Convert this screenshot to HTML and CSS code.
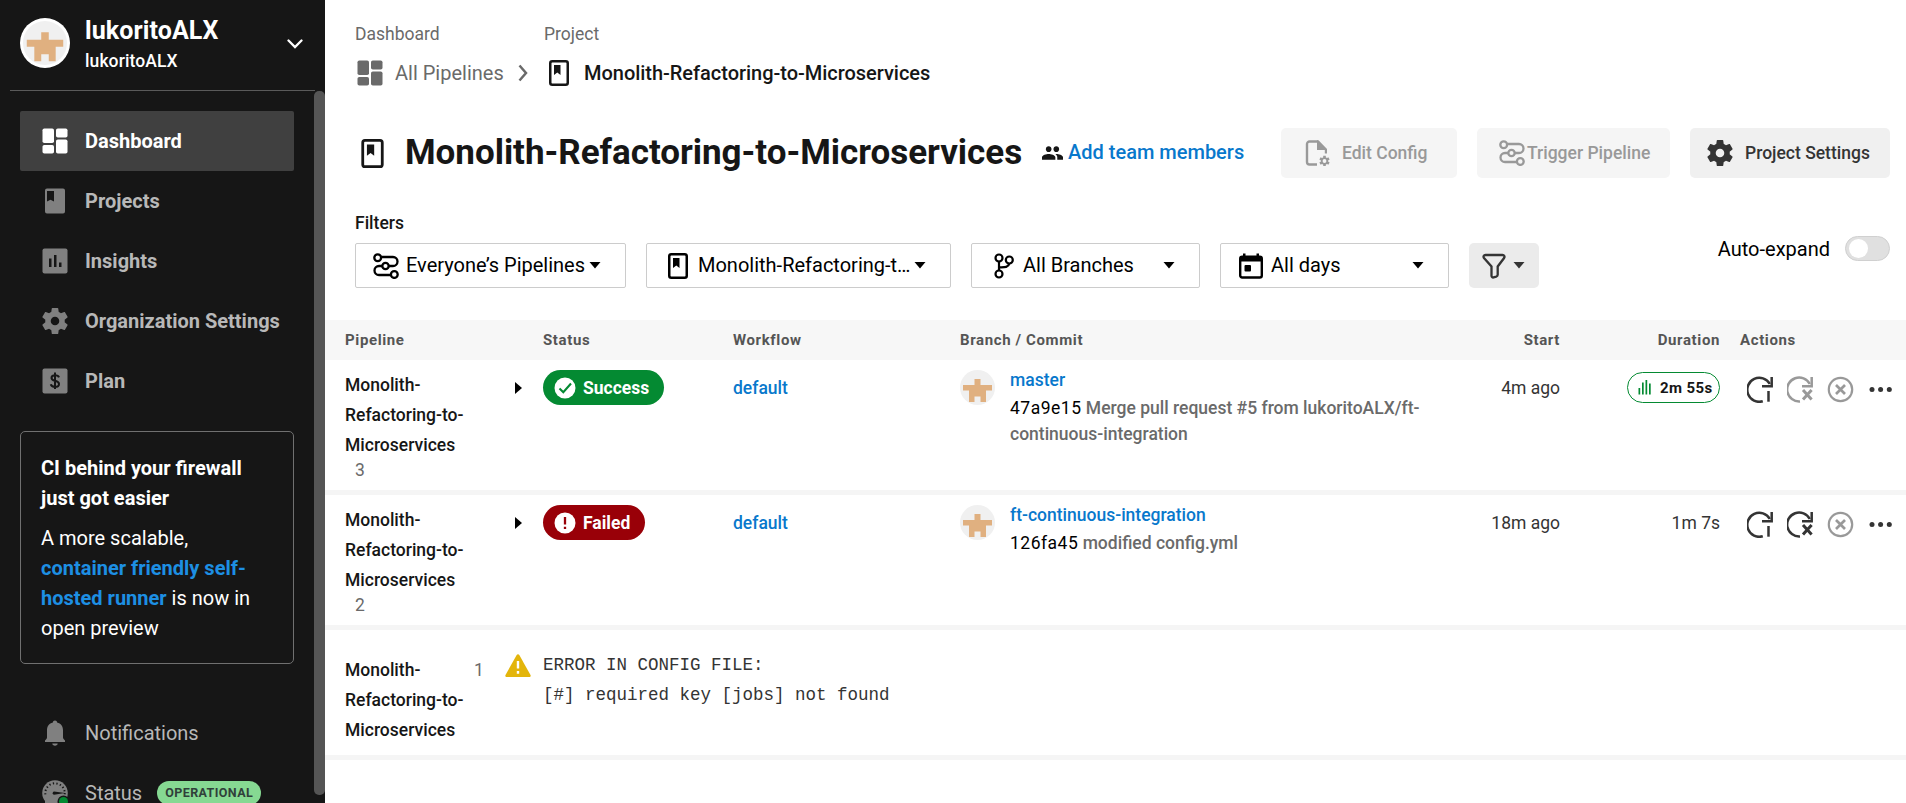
FILE: index.html
```html
<!DOCTYPE html>
<html lang="en">
<head>
<meta charset="utf-8">
<title>Monolith-Refactoring-to-Microservices - Pipelines</title>
<link rel="stylesheet" href="styles.css">
</head>
<body>
<svg class="defs" aria-hidden="true">
  <symbol id="dash" viewBox="0 0 26 26"><rect x="0.5" y="0.5" width="11.5" height="14.5" rx="1.8"/><rect x="14" y="0.5" width="11.5" height="9" rx="1.8"/><rect x="0.5" y="17" width="11.5" height="8.5" rx="1.8"/><rect x="14" y="11.5" width="11.5" height="14" rx="1.8"/></symbol>
  <symbol id="gear" viewBox="2 2 20 20"><path d="M19.43 12.98c.04-.32.07-.64.07-.98s-.03-.66-.07-.98l2.11-1.65c.19-.15.24-.42.12-.64l-2-3.46c-.12-.22-.39-.3-.61-.22l-2.49 1c-.52-.4-1.08-.73-1.69-.98l-.38-2.65C14.46 2.18 14.25 2 14 2h-4c-.25 0-.46.18-.49.42l-.38 2.65c-.61.25-1.17.59-1.69.98l-2.49-1c-.23-.09-.49 0-.61.22l-2 3.46c-.13.22-.07.49.12.64l2.11 1.65c-.04.32-.07.65-.07.98s.03.66.07.98l-2.11 1.65c-.19.15-.24.42-.12.64l2 3.46c.12.22.39.3.61.22l2.49-1c.52.4 1.08.73 1.69.98l.38 2.65c.03.24.24.42.49.42h4c.25 0 .46-.18.49-.42l.38-2.65c.61-.25 1.17-.59 1.69-.98l2.49 1c.23.09.49 0 .61-.22l2-3.46c.12-.22.07-.49-.12-.64l-2.11-1.65zM12 15.3a3.3 3.3 0 1 1 0-6.6 3.3 3.3 0 0 1 0 6.6z"/></symbol>
  <symbol id="book" viewBox="0 0 20 26"><rect x="1.25" y="1.25" width="17.5" height="23.5" rx="2" fill="none" stroke="currentColor" stroke-width="2.5"/><path d="M5 5h6.5v10l-3.2-2.4L5 15z"/></symbol>
  <symbol id="avatar" viewBox="0 0 35 35"><circle cx="17.5" cy="17.5" r="17.5" fill="#f0f0f0"/><path d="M14.5 9h6v6H32v5.500h-6V32h-5.500v-5.500h-6V32H9V20.500H3V15h11.500z" fill="#e0b080"/></symbol>
  <symbol id="pipe" viewBox="0 0 26 26"><g fill="none" stroke="currentColor" stroke-width="2.3"><circle cx="4.700" cy="4.700" r="3.400"/><circle cx="12.500" cy="13" r="3.200"/><circle cx="21.300" cy="21.500" r="3.400"/><path d="M8.200 4H20a4.500 4.500 0 0 1 0 9h-4.200M9.300 13H6a4.500 4.500 0 0 0 0 9h11.800"/></g></symbol>
  <symbol id="caret" viewBox="0 0 12 7"><path d="M0.500 0h11L6 6.500z"/></symbol>
  <symbol id="rerun" viewBox="0 0 27 27"><g fill="none" stroke="currentColor" stroke-width="2.500"><path d="M15.800 25.300a12 12 0 1 1 7-17.300"/><path d="M24.700 1v9.300h-9.700"/><path d="M21.500 15v10.700"/></g></symbol>
  <symbol id="rerunfail" viewBox="0 0 27 27"><g fill="none" stroke="currentColor" stroke-width="2.500"><path d="M13 25.500a12 12 0 1 1 9.800-17.500"/><path d="M24.700 1v9.300h-9.700"/><path stroke-width="3" d="M16 14l8.600 9.500M24.600 14L16 23.500"/></g></symbol>
  <symbol id="cancel" viewBox="0 0 27 27"><g fill="none" stroke="currentColor" stroke-width="2.200"><circle cx="13.500" cy="13.500" r="11.700"/><path stroke-width="2.700" d="M9 9l9 9M18 9l-9 9"/></g></symbol>
  <symbol id="dots" viewBox="0 0 27 27"><circle cx="5" cy="13.500" r="2.500"/><circle cx="13.600" cy="13.500" r="2.500"/><circle cx="22.300" cy="13.500" r="2.500"/></symbol>
</svg>
<div class="app">
  <aside class="sidebar">
    <header class="org">
      <span class="org-avatar"><svg><use href="#avatar"/></svg></span>
      <div class="org-names"><div class="org-name">lukoritoALX</div><div class="org-sub">lukoritoALX</div></div>
      <svg class="chev" viewBox="0 0 16 10"><path d="M1.500 1.500L8 8l6.500-6.500" fill="none" stroke="#fff" stroke-width="2.300" stroke-linecap="round"/></svg>
    </header>
    <div class="side-body">
      <nav class="nav">
        <a class="item active"><svg><use href="#dash"/></svg>Dashboard</a>
        <a class="item"><svg viewBox="0 0 26 26"><path fill-rule="evenodd" d="M5 .5h16a2 2 0 0 1 2 2v21a2 2 0 0 1-2 2H5a2 2 0 0 1-2-2v-21a2 2 0 0 1 2-2zM5 3v10.500l3.500-1.800 3.500 1.800V3z"/></svg>Projects</a>
        <a class="item"><svg viewBox="0 0 26 26"><rect x=".5" y=".5" width="25" height="25" rx="2"/><path d="M7 10.500h2.500V19H7zM12 7h2.500v12H12zM17 14.500h2.500V19H17z" fill="#161616"/></svg>Insights</a>
        <a class="item"><svg><use href="#gear"/></svg>Organization Settings</a>
        <a class="item"><svg viewBox="0 0 26 26"><rect x=".5" y=".5" width="25" height="25" rx="2"/><path d="M17 9.300c-.5-1.400-1.900-2.100-4-2.100-2 0-3.500 1-3.500 2.700 0 3.800 7.500 2 7.500 6 0 1.900-1.600 2.900-4 2.900-2.300 0-3.800-.9-4.200-2.600M13 4.500v16.500" fill="none" stroke="#161616" stroke-width="2"/></svg>Plan</a>
      </nav>
      <section class="promo">
        <h2>CI behind your firewall just got easier</h2>
        <p>A more scalable, <a>container friendly self-hosted runner</a> is now in open preview</p>
      </section>
      <nav class="nav foot">
        <a class="item"><svg viewBox="0 0 26 26"><path d="M13 .5c1.300 0 2.100.8 2.100 1.900C19 3.300 21 6.300 21 10v7.500c0 1.200 1 2 2 3V22H3v-1.500c1-1 2-1.800 2-3V10c0-3.700 2-6.700 5.900-7.600C10.900 1.300 11.700.5 13 .5zM10.300 23.500h5.400c0 1.300-1.200 2.200-2.700 2.200s-2.700-.9-2.700-2.200z"/></svg>Notifications</a>
        <a class="item"><svg viewBox="0 0 26 26"><circle cx="13" cy="13" r="12.800"/><circle cx="13" cy="13" r="9.700" fill="none" stroke="#161616" stroke-width="2" stroke-dasharray="1.300 2.300"/><path d="M3 15.500h20V26H3z"/><path d="M12 11.500l11 1.500-11 1.800a1.700 1.700 0 0 1 0-3.300z" fill="#161616"/><circle cx="21.500" cy="21.500" r="6" fill="#161616"/><circle cx="21.500" cy="21.500" r="4.500" fill="#048a32"/></svg>Status<span class="oper">OPERATIONAL</span></a>
      </nav>
      <div class="scroll"></div>
    </div>
  </aside>
  <main class="main">
    <div class="crumbs">
      <div class="crumb first"><div class="crumb-label">Dashboard</div><div class="crumb-row"><svg class="i26"><use href="#dash"/></svg>All Pipelines<svg class="sep" viewBox="0 0 10 18"><path d="M1.500 1.500L8 9l-6.500 7.500" fill="none" stroke="currentColor" stroke-width="2.500"/></svg></div></div>
      <div class="crumb second"><div class="crumb-label">Project</div><div class="crumb-row"><svg class="bk"><use href="#book"/></svg>Monolith-Refactoring-to-Microservices</div></div>
    </div>
    <div class="title-row">
      <svg class="title-icon"><use href="#book"/></svg>
      <h1>Monolith-Refactoring-to-Microservices</h1>
      <a class="team"><svg viewBox="1 5 22 14"><path d="M16 11c1.660 0 2.990-1.340 2.990-3S17.660 5 16 5c-1.660 0-3 1.340-3 3s1.340 3 3 3zm-8 0c1.660 0 2.990-1.340 2.990-3S9.660 5 8 5C6.340 5 5 6.340 5 8s1.340 3 3 3zm0 2c-2.330 0-7 1.170-7 3.500V19h14v-2.500c0-2.330-4.670-3.500-7-3.500zm8 0c-.29 0-.62.02-.97.05 1.160.84 1.970 1.970 1.970 3.450V19h6v-2.500c0-2.330-4.670-3.500-7-3.500z"/></svg><span>Add team members</span></a>
      <div class="buttons">
        <button class="btn edit off"><svg viewBox="0 0 26 26"><path d="M14 1.500H5.500a2.500 2.500 0 0 0-2.500 2.500v18a2.500 2.500 0 0 0 2.500 2.500H13" fill="none" stroke="currentColor" stroke-width="2.400"/><path d="M13 .3h1.500L23 9v4.500h-2.200V10H13z"/><path d="M20.500 15.800v10.400M16 18.400l9 5.200M25 18.400l-9 5.200" stroke="currentColor" stroke-width="2.600"/><circle cx="20.500" cy="21" r="2.800" fill="#f5f5f5" stroke="currentColor" stroke-width="1.800"/></svg>Edit Config</button>
        <button class="btn trig off"><svg><use href="#pipe"/></svg>Trigger Pipeline</button>
        <button class="btn sett"><svg><use href="#gear"/></svg>Project Settings</button>
      </div>
    </div>
    <div class="filters">
      <div class="filters-left">
        <div class="filters-label">Filters</div>
        <div class="selects">
          <div class="select s1"><svg class="i26"><use href="#pipe"/></svg><span>Everyone’s Pipelines</span><svg class="caret"><use href="#caret"/></svg></div>
          <div class="select s2"><svg class="bk"><use href="#book"/></svg><span>Monolith-Refactoring-t…</span><svg class="caret"><use href="#caret"/></svg></div>
          <div class="select s3"><svg class="branch" viewBox="0 0 20 26"><g fill="none" stroke="currentColor" stroke-width="2.200"><circle cx="5" cy="5" r="3.500"/><circle cx="5" cy="21" r="3.500"/><circle cx="15.300" cy="7" r="3.500"/><path d="M5 8.500v9M5 14.300c5 0 9.500.5 10.300-3.800"/></g></svg><span>All Branches</span><svg class="caret"><use href="#caret"/></svg></div>
          <div class="select s4"><svg class="cal" viewBox="0 0 24 26"><rect x="1.200" y="3.700" width="21.600" height="20.800" rx="2" fill="none" stroke="currentColor" stroke-width="2.400"/><path d="M1 3h22v5.500H1zM4 .5h2.500V4H4zM17.500.5H20V4h-2.500z"/><rect x="5.500" y="12" width="6.500" height="6.500" rx="1"/></svg><span>All days</span><svg class="caret"><use href="#caret"/></svg></div>
          <button class="funnel"><svg class="fn" viewBox="0 0 24 26"><path d="M3.500 2h17c1.800 0 2.500 1.500 1.600 3l-6.400 8.500v8.200c0 1-.6 1.600-1.500 1.900l-2.600.8c-1.200.3-2.100-.4-2.100-1.600v-9.300L2 5C1 3.500 1.700 2 3.500 2z" fill="none" stroke="currentColor" stroke-width="2.300"/></svg><svg class="caret"><use href="#caret"/></svg></button>
        </div>
      </div>
      <div class="auto">Auto-expand<span class="toggle"></span></div>
    </div>
    <div class="row head"><div>Pipeline</div><div></div><div>Status</div><div>Workflow</div><div>Branch / Commit</div><div class="r">Start</div><div class="r">Duration</div><div class="act-h">Actions</div></div>
    <div class="row">
      <div class="pl">Monolith-<br>Refactoring-to-<br>Microservices<div class="num">3</div></div>
      <svg class="tri" viewBox="0 0 7 12"><path d="M0 0l7 6-7 6z"/></svg>
      <div><span class="badge ok"><svg viewBox="0 0 22 22"><circle cx="11" cy="11" r="10.500" fill="#fff"/><path d="M5.500 11.500l3.800 3.800L17 6.500" fill="none" stroke="#048a32" stroke-width="2.100"/></svg>Success</span></div>
      <a class="wf">default</a>
      <div class="commit"><svg><use href="#avatar"/></svg><div><a>master</a><p><b>47a9e15</b> Merge pull request #5 from lukoritoALX/ft-<br>continuous-integration</p></div></div>
      <div class="r time">4m ago</div>
      <div class="r"><span class="dur"><svg viewBox="0 0 13 15"><path d="M.5 8h1.700v6.500H.5zM4 2.500h1.700v12H4zM7.500 0h1.700v14.500H7.500zM11 3.500h1.700v11H11z"/></svg>2m 55s</span></div>
      <div class="actions"><svg><use href="#rerun"/></svg><svg class="dim"><use href="#rerunfail"/></svg><svg class="dim"><use href="#cancel"/></svg><svg><use href="#dots"/></svg></div>
    </div>
    <div class="row">
      <div class="pl">Monolith-<br>Refactoring-to-<br>Microservices<div class="num">2</div></div>
      <svg class="tri" viewBox="0 0 7 12"><path d="M0 0l7 6-7 6z"/></svg>
      <div><span class="badge bad"><svg viewBox="0 0 22 22"><circle cx="11" cy="11" r="10.500" fill="#fff"/><path d="M11 5v7.500M11 14.700v2.300" fill="none" stroke="#990008" stroke-width="2.300"/></svg>Failed</span></div>
      <a class="wf">default</a>
      <div class="commit"><svg><use href="#avatar"/></svg><div><a>ft-continuous-integration</a><p><b>126fa45</b> modified config.yml</p></div></div>
      <div class="r time">18m ago</div>
      <div class="r time">1m 7s</div>
      <div class="actions"><svg><use href="#rerun"/></svg><svg><use href="#rerunfail"/></svg><svg class="dim"><use href="#cancel"/></svg><svg><use href="#dots"/></svg></div>
    </div>
    <div class="row err">
      <div class="pl">Monolith-<br>Refactoring-to-<br>Microservices</div>
      <div class="one">1</div>
      <svg class="warn" viewBox="0 0 26 23"><path d="M11.700 1c.6-1 2-1 2.600 0l11.200 20c.5 1-.1 2-1.200 2H1.700c-1.100 0-1.700-1-1.200-2z" fill="#e3b50b"/><path d="M13 7v7.500M13 17v2.700" stroke="#fff" stroke-width="2.400"/></svg>
      <pre>ERROR IN CONFIG FILE:
[#] required key [jobs] not found</pre>
    </div>
  </main>
</div>
</body>
</html>
```
FILE: styles.css
```css
* { box-sizing: border-box; }
body { margin: 0; font-family: Roboto, sans-serif; font-size: 20px; color: #161616; background: #fff; }
svg { display: block; flex: none; fill: currentColor; }
.defs { display: none; }
h1, h2, p, pre { margin: 0; }
button { font-family: inherit; border: 0; }
.app { display: flex; width: 1906px; height: 803px; overflow: hidden; }

/* Sidebar */
.sidebar { width: 325px; flex: none; background: #161616; color: #fff; display: flex; flex-direction: column; }
.org { height: 91px; flex: none; margin: 0 10px; border-bottom: 1px solid #5a5a5a; display: flex; align-items: flex-start; padding: 12px 12px 0 10px; }
.org-avatar { width: 50px; height: 50px; border-radius: 50%; background: #fff; padding: 3px; margin-top: 6px; }
.org-avatar svg { width: 44px; height: 44px; }
.org-names { margin: 1px 0 0 15px; flex: 1; }
.org-name { font-size: 25px; line-height: 36px; font-weight: 700; letter-spacing: .1px; }
.org-sub { font-size: 17.5px; line-height: 25px; font-weight: 500; letter-spacing: .1px; }
.chev { width: 16px; height: 10px; margin-top: 27px; }
.side-body { position: relative; flex: 1; min-height: 0; overflow: hidden; padding: 20px 31px 0 20px; }
.item { display: flex; align-items: center; height: 60px; padding-left: 22px; border-radius: 2px; font-weight: 700; color: #b8b8b8; white-space: nowrap; }
.item svg { width: 26px; height: 26px; margin-right: 17px; color: #808080; }
.item.active { background: #404040; color: #fff; }
.item.active svg { color: #fff; }
.promo { margin-top: 20px; height: 233px; border: 1px solid #707070; border-radius: 5px; padding: 21px 20px 0; line-height: 30px; }
.promo h2 { font-size: 20px; font-weight: 700; margin-bottom: 10px; line-height: 30px; }
.promo a { color: #1d8fe3; font-weight: 700; }
.foot { margin-top: 39px; }
.foot .item { font-weight: 400; }
.oper { margin-left: 15px; height: 24px; width: 104px; border-radius: 12px; background: #86d992; color: #30403a; font-size: 12.500px; font-weight: 700; letter-spacing: .4px; line-height: 24px; text-align: center; }
.scroll { position: absolute; right: 0; top: 0; width: 11px; height: 704px; border-radius: 5px; background: #555; }

/* Header */
.main { flex: 1; min-width: 0; }
.crumbs { display: flex; height: 128px; padding: 21px 0 0 30px; }
.first { width: 189px; color: #6a6a6a; }
.crumb-label { font-size: 17.5px; line-height: 27px; color: #6a6a6a; }
.crumb-row { display: flex; align-items: center; margin-top: 10px; height: 30px; white-space: nowrap; }
.i26 { width: 26px; height: 26px; }
.first .i26 { margin: 0 12px 0 2px; }
.sep { width: 10px; height: 18px; margin-left: 14px; }
.bk { width: 20px; height: 26px; }
.second .bk { margin: 0 15px 0 5px; }
.second .crumb-row { font-weight: 500; letter-spacing: -.03px; }
.title-row { height: 50px; display: flex; align-items: center; padding: 0 16px 0 36px; white-space: nowrap; }
.title-icon { width: 23px; height: 29px; margin-right: 21px; }
h1 { font-size: 35px; line-height: 50px; font-weight: 700; width: 617px; letter-spacing: -.03px; }
.team { display: flex; align-items: center; color: #0878cc; font-weight: 500; margin-left: 20px; }
.team span { padding-bottom: 2px; }
.team svg { width: 21px; height: 14px; color: #161616; margin-right: 5px; }
.buttons { display: flex; gap: 20px; margin-left: auto; }
.btn { height: 50px; border-radius: 5px; background: #f0f0f0; color: #343434; font-size: 17.5px; font-weight: 500; display: flex; align-items: center; padding: 0; white-space: nowrap; }
.btn svg { width: 26px; height: 26px; }
.off { background: #f5f5f5; color: #999; }
.edit { width: 176px; padding-left: 23px; }
.edit svg { margin-right: 12px; }
.trig { width: 193px; padding-left: 22px; }
.trig svg { margin-right: 2px; }
.sett { width: 200px; padding-left: 17px; }
.sett svg { margin-right: 12px; }

/* Filters */
.filters { height: 142px; display: flex; justify-content: space-between; padding: 32px 16px 0 30px; }
.filters-label { font-size: 17.5px; font-weight: 500; line-height: 26px; margin-bottom: 7px; }
.selects { display: flex; gap: 20px; }
.select { height: 45px; border: 1px solid #ccc; border-radius: 2px; display: flex; align-items: center; color: #000; white-space: nowrap; }
.select span { padding-bottom: 1px; }
.caret { width: 12px; height: 7px; margin-left: auto; }
.s1 { width: 271px; padding: 0 24px 0 17px; }
.s1 span { margin-left: 7px; }
.s2 { width: 305px; padding: 0 24px 0 21px; }
.s2 span { margin-left: 10px; }
.s3 { width: 229px; padding: 0 24px 0 22px; }
.branch { width: 20px; height: 26px; }
.s3 span { margin-left: 9px; }
.s4 { width: 229px; padding: 0 24px 0 18px; }
.cal { width: 24px; height: 26px; }
.s4 span { margin-left: 8px; }
.funnel { width: 70px; height: 45px; border-radius: 5px; background: #ebebeb; color: #343434; padding: 0 14px 0 13px; display: flex; align-items: center; }
.fn { width: 24px; height: 26px; }
.auto { display: flex; align-items: center; height: 30px; margin-top: 24px; color: #000; }
.toggle { width: 45px; height: 25px; border: 1px solid #d0d0d0; border-radius: 13px; background: #e0e0e0; margin: 0 0 1px 15px; padding: 2px 3px; }
.toggle::before { content: ""; display: block; width: 19px; height: 19px; border-radius: 50%; background: #fff; }

/* Table */
.row { display: grid; grid-template-columns: 170px 28px 190px 227px 480px 120px 160px 186px; padding-left: 20px; height: 135px; border-bottom: 5px solid #f5f5f5; align-items: start; }
.row.head { height: 40px; border: 0; background: #f7f7f7; color: #555; font-size: 15px; font-weight: 700; letter-spacing: .62px; line-height: 40px; }
.r { text-align: right; }
.act-h { padding-left: 20px; }
.pl { font-size: 17.5px; font-weight: 500; line-height: 30px; padding-top: 10px; }
.num { font-weight: 400; color: #6a6a6a; line-height: 20px; padding-left: 10px; }
.tri { width: 7px; height: 12px; margin-top: 22px; color: #000; }
.badge { display: inline-flex; align-items: center; height: 35px; border-radius: 18px; margin-top: 10px; padding: 0 15px 0 11px; color: #fff; font-size: 17.5px; font-weight: 700; }
.badge svg { width: 22px; height: 22px; margin-right: 7px; }
.ok { background: #048a32; }
.bad { background: #990008; }
.wf { color: #0878cc; font-size: 17.5px; font-weight: 500; line-height: 26px; margin-top: 15px; }
.commit { display: flex; font-size: 17.5px; }
.commit svg { width: 35px; height: 35px; margin: 10px 15px 0 0; }
.commit a { display: block; color: #0878cc; font-weight: 500; line-height: 26px; margin-top: 7px; }
.commit p { color: #6a6a6a; font-weight: 500; line-height: 26px; margin-top: 2px; white-space: nowrap; }
.commit b { font-weight: 400; color: #000; letter-spacing: .5px; }
.time { font-size: 17.5px; line-height: 26px; margin-top: 15px; color: #343434; }
.dur { display: inline-flex; align-items: center; width: 93px; height: 31px; border: 1px solid #048a32; border-radius: 16px; margin-top: 12px; padding-left: 10px; font-size: 15px; font-weight: 700; letter-spacing: .4px; }
.dur svg { width: 13px; height: 15px; margin-right: 9px; color: #048a32; }
.actions { display: flex; gap: 13px; padding: 16px 0 0 27px; color: #343434; }
.actions svg { width: 27px; height: 27px; }
.dim { color: #999; }
.row.err { height: 130px; grid-template-columns: 129px 31px 38px 1fr; }
.err .pl { padding-top: 25px; }
.one { font-size: 17.5px; line-height: 30px; color: #6a6a6a; margin-top: 25px; }
.warn { width: 26px; height: 23px; margin-top: 24px; }
pre { font-family: "Liberation Mono", monospace; font-size: 17.5px; line-height: 30px; padding-top: 20px; color: #343434; }
```
